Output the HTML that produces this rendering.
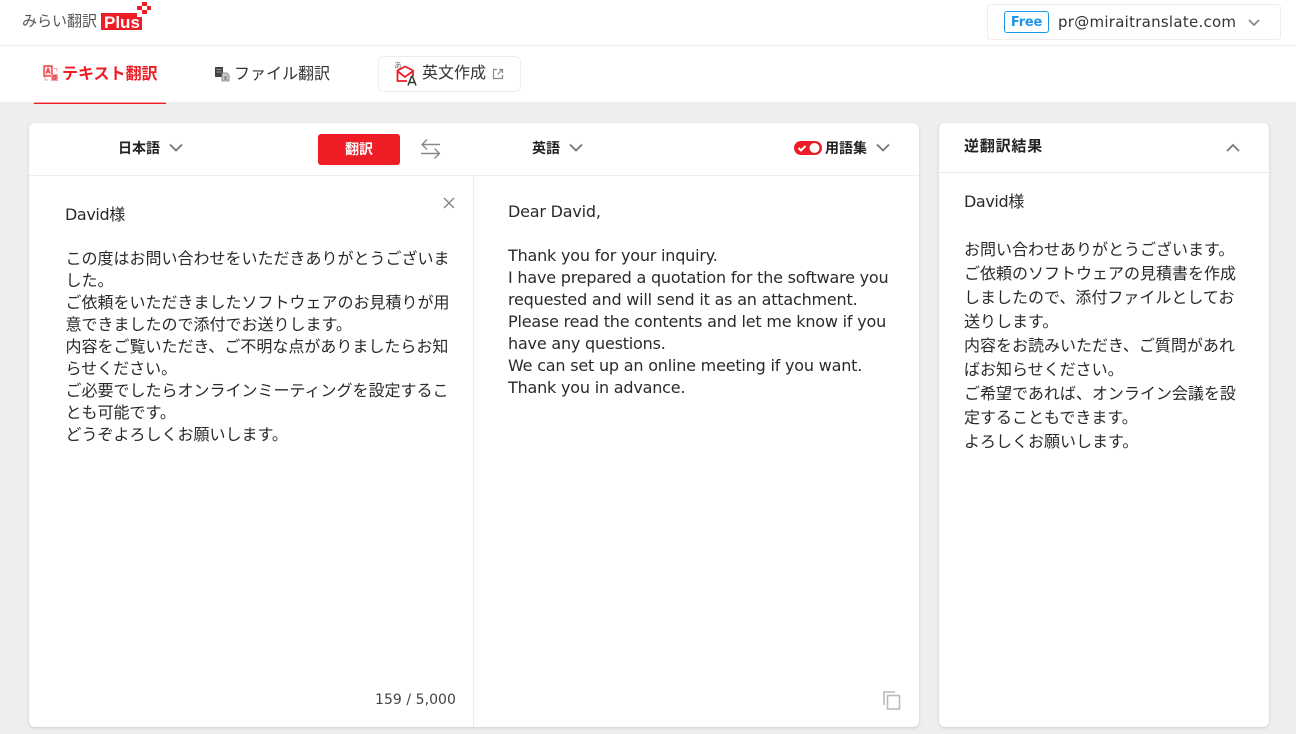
<!DOCTYPE html>
<html lang="ja"><head><meta charset="utf-8"><title>みらい翻訳</title>
<style>
*{box-sizing:border-box}
html,body{margin:0;padding:0}
body{width:1296px;height:734px;overflow:hidden;background:#eee;position:relative;font-family:"DejaVu Sans","Noto Sans CJK JP",sans-serif;color:#222}
.a{position:absolute;white-space:nowrap}
.jp{font-family:"Noto Sans CJK JP",sans-serif}
.t{position:absolute;white-space:pre;font-family:"DejaVu Sans","Noto Sans CJK JP",sans-serif;font-size:16px;line-height:22px;color:#2a2a2a}
.t.j{font-family:"Noto Sans CJK JP",sans-serif}
.e{letter-spacing:-.2px}
svg{position:absolute;overflow:visible}
</style></head><body>
<div class="a" style="left:0;top:0;width:1296px;height:46px;background:#fff;border-bottom:1px solid #eee"></div>
<div class="a" style="left:0;top:46px;width:1296px;height:56px;background:#fff"></div>
<div class="a jp" style="left:22px;top:10px;font-size:15px;line-height:22px;color:#555">みらい翻訳</div>
<div class="a" style="left:101px;top:13px;width:41px;height:17px;background:#ee1c25"></div>
<div class="a" style="left:104px;top:13px;font:bold 17px/19px 'Liberation Sans',sans-serif;color:#fff">Plus</div>
<svg style="left:0;top:0" width="160" height="34"><rect x="137" y="13" width="5" height="4" fill="#fff"/><g fill="#ee1c25"><rect x="142" y="2" width="5" height="4"/><rect x="147" y="6" width="4" height="4"/><rect x="137" y="6" width="5" height="4"/><rect x="142" y="10" width="5" height="4"/></g></svg>
<div class="a" style="left:987px;top:4px;width:294px;height:36px;border:1px solid #eee;border-radius:4px"></div>
<div class="a" style="left:1004px;top:11px;width:45px;height:22px;border:1px solid #1e96e6;border-radius:3px;font:bold 13px/21px 'DejaVu Sans',sans-serif;color:#1e96e6;text-align:center;letter-spacing:-.2px">Free</div>
<div class="a" style="left:1058px;top:11px;font-size:15px;line-height:22px;color:#333;letter-spacing:.26px">pr@miraitranslate.com</div>
<svg style="left:1248px;top:18px" width="12" height="10"><path d="M1 2l5 5 5-5" fill="none" stroke="#888" stroke-width="1.700"/></svg>
<svg style="left:43px;top:65px" width="16" height="17"><path d="M1 1h8v10H1z" fill="#fde3e4" stroke="#ee1c25" stroke-width="1.200"/><path d="M3 8.500l2-5 2 5M3.800 7h2.400" fill="none" stroke="#ee1c25" stroke-width="1"/><rect x="8" y="9" width="7" height="7" fill="#f59ea2"/><path d="M10 11h3v3h-3z" fill="none" stroke="#ee1c25" stroke-width=".9"/><path d="M11 3.500h3v3M2 12v3h3" fill="none" stroke="#f59ea2"/></svg>
<div class="a jp" style="left:62px;top:61px;font-size:16px;line-height:22px;font-weight:700;color:#ee1c25">テキスト翻訳</div>
<div class="a" style="left:34px;top:103px;width:132px;height:1px;background:#ee1c25;box-shadow:0 -1px 0 #f09ca0"></div>
<svg style="left:214px;top:66px" width="16" height="16"><rect x="1" y="1" width="8" height="10" fill="#444"/><path d="M2.500 3.500h5M2.500 6h5" stroke="#999"/><path d="M8 7h5l2 2v6H8z" fill="#ccc" stroke="#777" stroke-width=".8"/><path d="M10 11h3M10 13h3" stroke="#666"/></svg>
<div class="a jp" style="left:234px;top:61px;font-size:16px;line-height:22px;color:#333">ファイル翻訳</div>
<div class="a" style="left:378px;top:56px;width:143px;height:36px;border:1px solid #eee;border-radius:5px"></div>
<svg style="left:394px;top:62px" width="26" height="26"><path d="M3.500 8.500 11 4.500l8 4V19H3.500z" fill="none" stroke="#ee1c25" stroke-width="1.800"/><path d="M4 9.500l7 5.500 7.500-5.500" fill="none" stroke="#ee1c25" stroke-width="1.800"/><rect x="13" y="14" width="11" height="10" fill="#fff"/><path d="M14 23.500l3.500-9h1l3.500 9M15.300 20.500h5.400" fill="none" stroke="#333" stroke-width="1.500"/></svg>
<div class="a jp" style="left:394px;top:61px;font-size:8px;line-height:10px;color:#777">あ</div>
<div class="a jp" style="left:422px;top:60px;font-size:16px;line-height:22px;color:#333">英文作成</div>
<svg style="left:492px;top:68px" width="12" height="12"><path d="M5 1.500H1.500v9h9V7M7 1.500h3.500V5M10.500 1.500 5.500 6.500" fill="none" stroke="#888" stroke-width="1.200"/></svg>

<div class="a" style="left:29px;top:123px;width:890px;height:604px;background:#fff;border-radius:6px;box-shadow:0 1px 3px rgba(0,0,0,.14)"></div>
<div class="a" style="left:29px;top:175px;width:890px;height:1px;background:#eeeef2"></div>
<div class="a" style="left:473px;top:176px;width:1px;height:551px;background:#eeeef2"></div>
<div class="a jp" style="left:118px;top:137px;font-size:14px;line-height:22px;font-weight:700;color:#222">日本語</div>
<svg style="left:169px;top:143px" width="14" height="10"><path d="M1 1.500l6 6 6-6" fill="none" stroke="#777" stroke-width="1.800"/></svg>
<div class="a" style="left:318px;top:134px;width:82px;height:31px;background:#ee1c25;border-radius:3px"></div>
<div class="a jp" style="left:318px;top:138px;width:82px;text-align:center;font-size:14px;line-height:22px;font-weight:700;color:#fff">翻訳</div>
<svg style="left:420px;top:138px" width="22" height="22"><path d="M20 6.500H2M7 1.500l-5 5 5 5M1 15.500h18M14.500 10.500l5 5-5 5" fill="none" stroke="#888" stroke-width="1.400"/></svg>
<div class="a jp" style="left:532px;top:137px;font-size:14px;line-height:22px;font-weight:700;color:#222">英語</div>
<svg style="left:569px;top:143px" width="14" height="10"><path d="M1 1.500l6 6 6-6" fill="none" stroke="#777" stroke-width="1.800"/></svg>
<svg style="left:794px;top:141px" width="28" height="14"><rect x="0" y="0" width="28" height="14" rx="7" fill="#ee1c25"/><circle cx="20.500" cy="7" r="5" fill="#fff"/><path d="M4.500 7l2.500 2.500 4.500-4.500" fill="none" stroke="#fff" stroke-width="2"/></svg>
<div class="a jp" style="left:825px;top:137px;font-size:14px;line-height:22px;font-weight:700;color:#222">用語集</div>
<svg style="left:876px;top:143px" width="14" height="10"><path d="M1 1.500l6 6 6-6" fill="none" stroke="#777" stroke-width="1.800"/></svg>
<svg style="left:443px;top:197px" width="12" height="12"><path d="M1 1l10 10M11 1 1 11" stroke="#888" stroke-width="1.500"/></svg>

<div class="t" style="left:65px;top:204px;letter-spacing:-.4px">David様</div>
<div class="t j" style="left:65.500px;top:246px">この度はお問い合わせをいただきありがとうございま</div>
<div class="t j" style="left:65.500px;top:268px">した。</div>
<div class="t j" style="left:65.500px;top:290px">ご依頼をいただきましたソフトウェアのお見積りが用</div>
<div class="t j" style="left:65.500px;top:312px">意できましたので添付でお送りします。</div>
<div class="t j" style="left:65.500px;top:334px">内容をご覧いただき、ご不明な点がありましたらお知</div>
<div class="t j" style="left:65.500px;top:356px">らせください。</div>
<div class="t j" style="left:65.500px;top:378px">ご必要でしたらオンラインミーティングを設定するこ</div>
<div class="t j" style="left:65.500px;top:400px">とも可能です。</div>
<div class="t j" style="left:65.500px;top:422px">どうぞよろしくお願いします。</div>
<div class="a" style="left:375px;top:690px;font-size:14px;line-height:20px;color:#444;letter-spacing:.05px">159 / 5,000</div>

<div class="t e" style="left:508px;top:201px">Dear David,</div>
<div class="t e" style="left:508px;top:245px">Thank you for your inquiry.</div>
<div class="t e" style="left:508px;top:267px">I have prepared a quotation for the software you</div>
<div class="t e" style="left:508px;top:289px">requested and will send it as an attachment.</div>
<div class="t e" style="left:508px;top:311px">Please read the contents and let me know if you</div>
<div class="t e" style="left:508px;top:333px">have any questions.</div>
<div class="t e" style="left:508px;top:355px">We can set up an online meeting if you want.</div>
<div class="t e" style="left:508px;top:377px">Thank you in advance.</div>
<svg style="left:883px;top:691px" width="18" height="19"><path d="M1 14V1h11" fill="none" stroke="#bbb" stroke-width="1.600"/><rect x="4.500" y="4.500" width="12" height="13.500" fill="none" stroke="#bbb" stroke-width="1.600"/></svg>

<div class="a" style="left:939px;top:123px;width:330px;height:604px;background:#fff;border-radius:6px;box-shadow:0 1px 3px rgba(0,0,0,.14)"></div>
<div class="a" style="left:939px;top:172px;width:330px;height:1px;background:#eeeef2"></div>
<div class="a jp" style="left:964px;top:135px;font-size:15px;line-height:22px;font-weight:700;color:#222;letter-spacing:.8px">逆翻訳結果</div>
<svg style="left:1226px;top:143px" width="14" height="10"><path d="M1 8l6-6 6 6" fill="none" stroke="#777" stroke-width="1.800"/></svg>
<div class="t" style="left:964px;top:191px;letter-spacing:-.4px">David様</div>
<div class="t j" style="left:964px;top:237px">お問い合わせありがとうございます。</div>
<div class="t j" style="left:964px;top:261px">ご依頼のソフトウェアの見積書を作成</div>
<div class="t j" style="left:964px;top:285px">しましたので、添付ファイルとしてお</div>
<div class="t j" style="left:964px;top:309px">送りします。</div>
<div class="t j" style="left:964px;top:333px">内容をお読みいただき、ご質問があれ</div>
<div class="t j" style="left:964px;top:357px">ばお知らせください。</div>
<div class="t j" style="left:964px;top:381px">ご希望であれば、オンライン会議を設</div>
<div class="t j" style="left:964px;top:405px">定することもできます。</div>
<div class="t j" style="left:964px;top:429px">よろしくお願いします。</div>
</body></html>
